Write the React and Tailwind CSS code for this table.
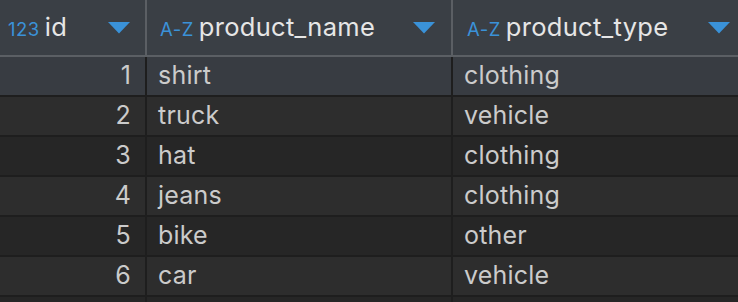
const rows = [
  { id: 1, name: 'shirt', type: 'clothing' },
  { id: 2, name: 'truck', type: 'vehicle' },
  { id: 3, name: 'hat', type: 'clothing' },
  { id: 4, name: 'jeans', type: 'clothing' },
  { id: 5, name: 'bike', type: 'other' },
  { id: 6, name: 'car', type: 'vehicle' },
  { id: 7, name: '', type: '' },
];

function SortArrow() {
  return (
    <svg width="22" height="12" viewBox="0 0 22 12" className="shrink-0" aria-hidden="true">
      <path d="M0 0h22L11 11.5z" fill="#3a92d8" />
    </svg>
  );
}

function HeaderCell({ tag, label, className }) {
  return (
    <div className={`flex items-center justify-between h-full ${className}`}>
      <div className="flex items-baseline">
        <span className="text-[18.5px] tracking-[0.5px] text-[#3a92d8] mr-[5px]">{tag}</span>
        <span className="text-[25.5px] tracking-[0.3px] text-[#e6e6e6]">{label}</span>
      </div>
      <SortArrow />
    </div>
  );
}

function rowBg(i) {
  if (i === 0) return 'bg-[#383c42]';
  return i % 2 === 1 ? 'bg-[#2d2d2d]' : 'bg-[#262626]';
}

export default function App() {
  return (
    <div
      className="w-[738px] h-[302px] overflow-hidden bg-[#262626]"
      style={{ fontFamily: 'Inter, "Noto Sans", sans-serif' }}
    >
      <div className="flex h-[57px] bg-[#3a3f45] border-b-2 border-[#5b5f64]">
        <HeaderCell tag="123" label="id" className="w-[147px] pl-[8px] pr-[15px] border-r-2 border-[#5b5f64]" />
        <HeaderCell tag="A-Z" label="product_name" className="w-[306px] pl-[13px] pr-[16px] border-r-2 border-[#5b5f64]" />
        <HeaderCell tag="A-Z" label="product_type" className="flex-1 pl-[14px] pr-[8px]" />
      </div>
      {rows.map((r, i) => (
        <div key={r.id} className={`flex h-[40px] border-b-2 border-[#1e1e1e] text-[25px] tracking-[0.2px] text-[#cbcbcb] ${rowBg(i)}`}>
          <div className="w-[147px] flex items-center justify-end pr-[14px] border-r-2 border-[#1e1e1e]">
            {r.name ? r.id : ''}
          </div>
          <div className="w-[306px] flex items-center pl-[11px] border-r-2 border-[#1e1e1e]">{r.name}</div>
          <div className="flex-1 flex items-center pl-[11px]">{r.type}</div>
        </div>
      ))}
    </div>
  );
}
